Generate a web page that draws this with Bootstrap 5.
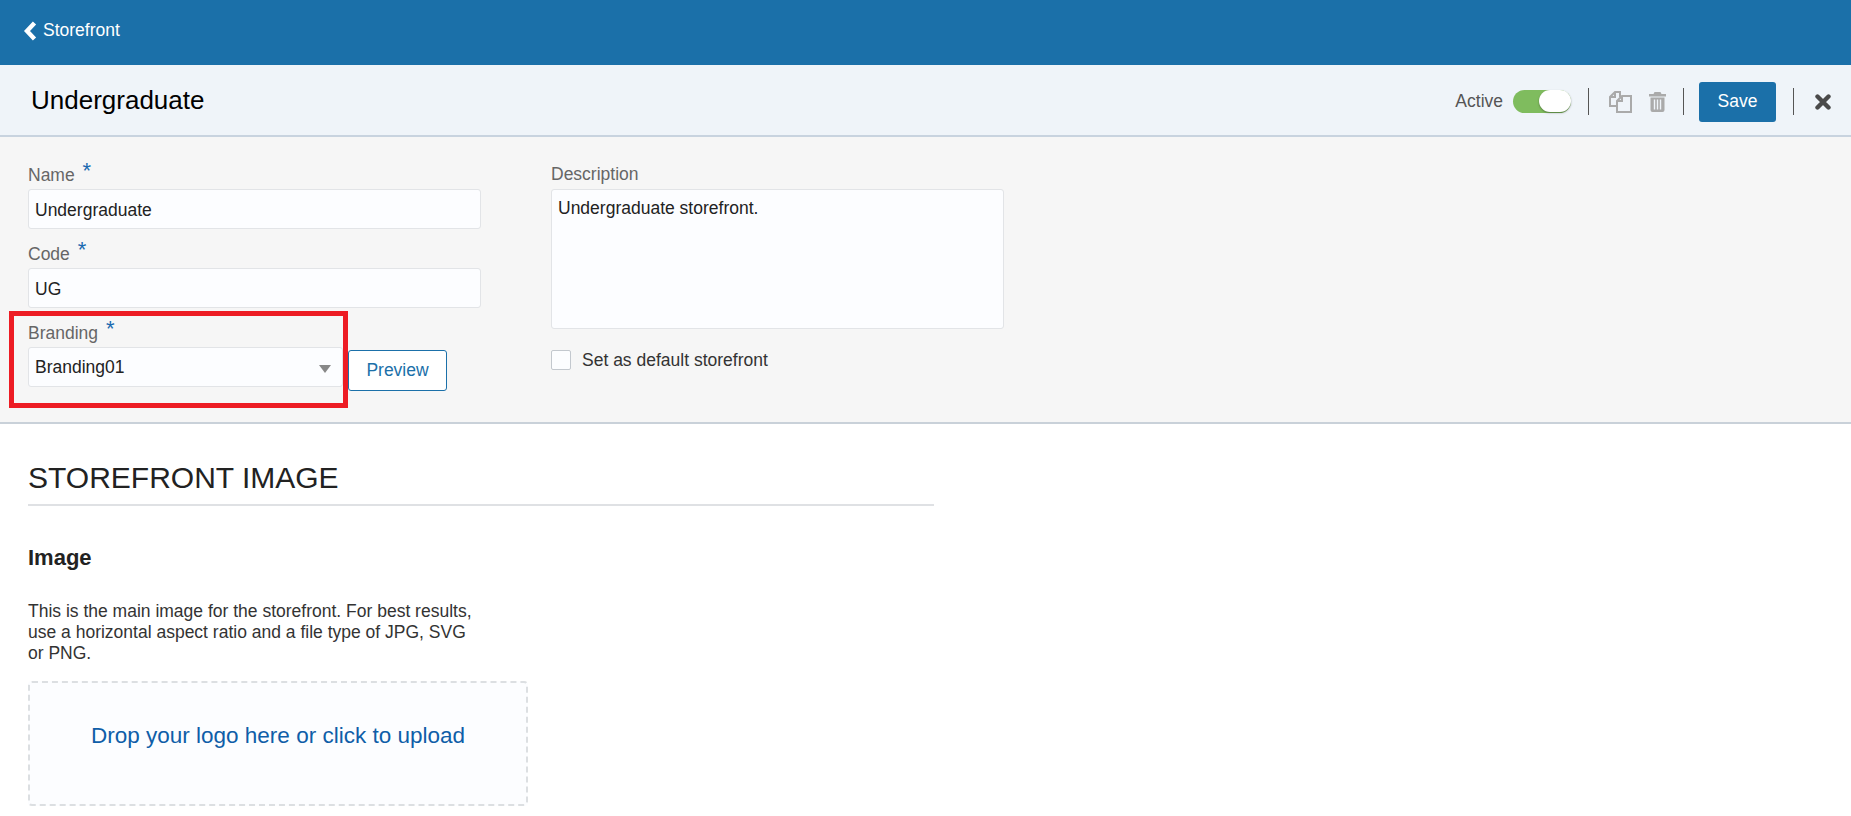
<!DOCTYPE html>
<html lang="en">
<head>
<meta charset="utf-8">
<title>Undergraduate</title>
<link href="https://cdn.jsdelivr.net/npm/bootstrap@5.3.0/dist/css/bootstrap.min.css" rel="stylesheet">
<style>
body { font-family: "Liberation Sans", Arial, sans-serif; background: #fff; color: #222; overflow: hidden; height: 816px; }
.topbar { height: 65px; background: #1b70a9; padding: 0 0 4px 23px; color: #fff; font-size: 17.5px; }
.topbar svg { margin-right: 6px; }
.headbar { height: 72px; background: #eff4f9; border-bottom: 2px solid #c8d3df; padding: 0 20px 0 31px; }
.headbar h1 { font-size: 26px; font-weight: 400; color: #000; margin: 0; position: relative; top: 1px; }
.actions { padding-top: 3px; }
.active-lbl { font-size: 17.5px; color: #555; margin-right: 10px; }
.tog { width: 58px; height: 23px; border-radius: 12px; background: #7fbc5e; margin-right: 17px; display: flex; justify-content: flex-end; }
.tog i { display: block; width: 32px; height: 22px; background: #fff; border-radius: 12px; box-shadow: 0 1px 2px rgba(0,0,0,.35); }
.vsep { width: 1px; height: 27px; background: #555; }
.ico-copy { margin-left: 20px; }
.ico-trash { margin: 0 17px; }
.btn-save { background: #1b70a9; color: #fff; border: 0; width: 77px; height: 40px; font-size: 17.5px; border-radius: 3px; padding: 0; margin: 0 17px 0 15px; }
.btn-save:hover { background: #1b70a9; color: #fff; }
.ico-close { margin-left: 21px; }
.formpanel { background: #f6f6f6; border-bottom: 2px solid #c9d1d9; height: 287px; padding: 26px 0 0 28px; gap: 70px; }
.leftcol, .rightcol { width: 453px; }
.fgrp { margin-bottom: 13px; }
.flbl { display: block; height: 26px; line-height: 22px; font-size: 17.5px; color: #666; margin: 0; }
.leftcol .flbl { line-height: 18px; }
.flbl b { font-weight: 400; color: #1b6ab0; font-size: 22px; line-height: 1; margin-left: 3px; position: relative; top: -3px; }
.formpanel .form-control, .formpanel .form-select { height: 40px; font-size: 17.5px; color: #222; background-color: #fcfdff; border: 1px solid #e2e4e7; border-radius: 3px; padding: 2px 7px 0 6px; box-shadow: none; }
.formpanel textarea.form-control { height: 140px; padding: 5px 7px 5px 6px; resize: none; }
.formpanel .form-select { width: 315px; background-image: none; padding-top: 0; }
.selwrap { width: 315px; }
.caret { width: 0; height: 0; border-left: 6px solid transparent; border-right: 6px solid transparent; border-top: 8px solid #888; position: absolute; right: 12px; top: 18px; pointer-events: none; }
.btn-prev { width: 99px; height: 41px; margin-left: 5px; margin-top: 3px; background: #fff; color: #1b70a9; border: 1px solid #1b70a9; border-radius: 3px; font-size: 17.5px; padding: 0; }
.redmark { position: absolute; left: -19px; top: -10px; width: 339px; height: 97px; border: 5px solid #ed1c24; pointer-events: none; }
.chk { margin-top: 18px; gap: 11px; font-size: 17.5px; color: #333; }
.chk .form-check-input { width: 20px; height: 20px; margin: 0; border: 1px solid #c3c8ce; border-radius: 2px; background-color: #fcfdff; flex: none; }
.imgsec { padding: 0 0 0 28px; }
.sechead { width: 906px; height: 82px; border-bottom: 2px solid #dfe1e4; font-size: 30px; line-height: 1; font-weight: 400; margin: 0; padding-top: 39px; color: #222; }
.imgttl { font-size: 22px; font-weight: 700; color: #222; margin: 39px 0 0; line-height: 26px; }
.imgtxt { width: 450px; font-size: 17.5px; line-height: 21px; color: #333; margin: 30px 0 0; }
.dropz { width: 500px; height: 125px; margin-top: 17px; background: #fcfdff; border: 2px dashed #dcdfe2; border-radius: 4px; color: #0f5ea8; font-size: 22.5px; padding-bottom: 16px; }
</style>
</head>
<body>
<div class="topbar d-flex align-items-center">
  <svg width="14" height="20" viewBox="0 0 14 20" aria-hidden="true"><path d="M11.5 2 L4 10 L11.5 18" fill="none" stroke="#fff" stroke-width="4.4"/></svg>
  <span>Storefront</span>
</div>
<div class="headbar d-flex align-items-center justify-content-between">
  <h1>Undergraduate</h1>
  <div class="actions d-flex align-items-center">
    <span class="active-lbl">Active</span>
    <div class="tog"><i></i></div>
    <div class="vsep"></div>
    <svg class="ico-copy" width="23" height="22" viewBox="0 0 23 22" aria-hidden="true"><g fill="none" stroke="#aaa" stroke-width="2"><path d="M8 15H1V6l5-5h5v5"/><path d="M6 1v5H1"/><path d="M13 5h9v16H8v-11z" fill="#eff4f9"/><path d="M13 5v5H8"/></g></svg>
    <svg class="ico-trash" width="17" height="20" viewBox="0 0 17 20" aria-hidden="true"><path d="M5.500 0h6l1 2h4.500v2.500H0V2h4.500zM1.500 5.500h14V18a2 2 0 0 1-2 2h-10a2 2 0 0 1-2-2z" fill="#aaa"/><path d="M5.500 7.500v10M8.500 7.500v10M11.500 7.500v10" stroke="#eff4f9" stroke-width="1.400"/></svg>
    <div class="vsep"></div>
    <button class="btn btn-save" type="button">Save</button>
    <div class="vsep"></div>
    <svg class="ico-close" width="16" height="16" viewBox="0 0 16 16" aria-hidden="true"><path d="M2.500 2.500 L13.500 13.500 M13.500 2.500 L2.500 13.500" stroke="#4a4a4a" stroke-width="4.400" stroke-linecap="round"/></svg>
  </div>
</div>
<div class="formpanel d-flex">
  <div class="leftcol">
    <div class="fgrp">
      <label class="flbl" for="f-name">Name <b>*</b></label>
      <input id="f-name" class="form-control" type="text" value="Undergraduate">
    </div>
    <div class="fgrp">
      <label class="flbl" for="f-code">Code <b>*</b></label>
      <input id="f-code" class="form-control" type="text" value="UG">
    </div>
    <div class="position-relative">
      <label class="flbl" for="f-brand">Branding <b>*</b></label>
      <div class="d-flex align-items-start">
        <div class="selwrap position-relative">
          <select id="f-brand" class="form-select"><option>Branding01</option></select>
          <span class="caret"></span>
        </div>
        <button class="btn btn-prev" type="button">Preview</button>
      </div>
      <div class="redmark"></div>
    </div>
  </div>
  <div class="rightcol">
    <label class="flbl" for="f-desc">Description</label>
    <textarea id="f-desc" class="form-control d-block">Undergraduate storefront.</textarea>
    <div class="chk d-flex align-items-center">
      <input id="f-def" class="form-check-input" type="checkbox">
      <label for="f-def">Set as default storefront</label>
    </div>
  </div>
</div>
<div class="imgsec">
  <h2 class="sechead">STOREFRONT IMAGE</h2>
  <h3 class="imgttl">Image</h3>
  <p class="imgtxt">This is the main image for the storefront. For best results, use a horizontal aspect ratio and a file type of JPG, SVG or PNG.</p>
  <div class="dropz d-flex align-items-center justify-content-center">Drop your logo here or click to upload</div>
</div>
<script src="https://cdn.jsdelivr.net/npm/bootstrap@5.3.0/dist/js/bootstrap.bundle.min.js"></script>
</body>
</html>
